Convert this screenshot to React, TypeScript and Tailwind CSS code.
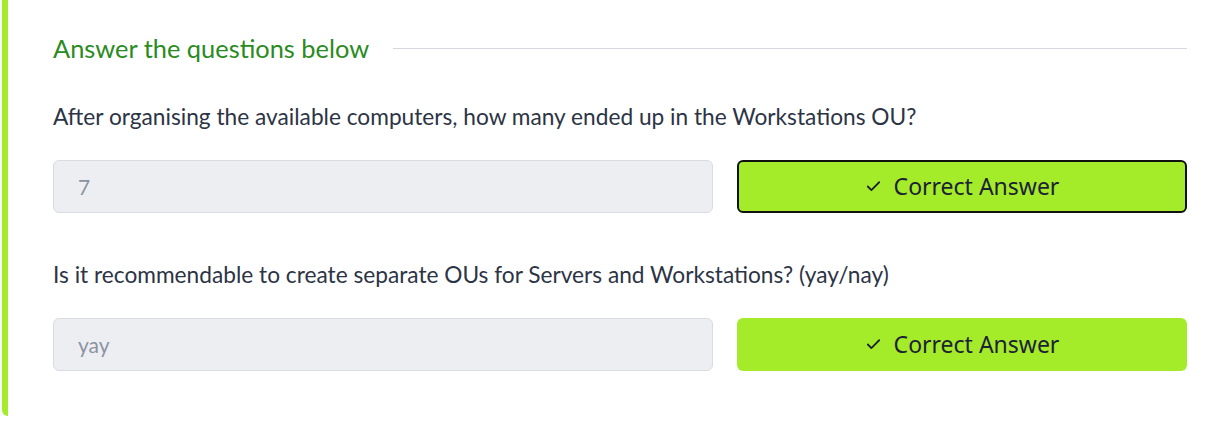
import { Check } from 'lucide-react';

interface Question {
  text: string;
  answer: string;
  focused?: boolean;
}

const questions: Question[] = [
  {
    text: 'After organising the available computers, how many ended up in the Workstations OU?',
    answer: '7',
    focused: true,
  },
  {
    text: 'Is it recommendable to create separate OUs for Servers and Workstations? (yay/nay)',
    answer: 'yay',
  },
];

function AnswerRow({ question }: { question: Question }) {
  return (
    <div className="flex flex-col">
      <p className="text-[22.7px] leading-[26px] text-[#2c3445] font-['Lato',sans-serif]">{question.text}</p>
      <div className="mt-[30px] flex gap-6">
        <input
          readOnly
          value={question.answer}
          className="w-[660px] h-[53px] rounded-md border border-[#d9dce2] bg-[#edeef2] px-[24px] text-[21px] text-[#8b93a3] font-['Lato',sans-serif] outline-none"
        />
        <button
          className={`flex-1 h-[53px] rounded-md bg-[#a4eb2a] flex items-center justify-center gap-3 text-[23px] text-[#1d2233] font-['Noto_Sans',sans-serif] cursor-pointer ${
            question.focused ? 'border-2 border-[#111111]' : 'border-2 border-transparent'
          }`}
        >
          <Check className="w-[17px] h-[17px]" strokeWidth={2.5} />
          Correct Answer
        </button>
      </div>
    </div>
  );
}

export default function App() {
  return (
    <div className="min-h-[426px] bg-[#f8f8fa]">
      <div className="ml-[2px] -mt-[10px] bg-white border-l-[6px] border-[#a4eb2a] rounded-bl-md pl-[45px] pr-[41px] pt-[38px] pb-[45px]">
        {/* Section heading with divider line */}
        <div className="flex items-center gap-6">
          <h2 className="text-[25.4px] leading-[40px] text-[#2a8b1e] font-['Lato',sans-serif]">Answer the questions below</h2>
          <div className="flex-1 h-px bg-[#d5d8de]" />
        </div>
        <div className="mt-[36px] flex flex-col gap-[49px]">
          {questions.map((q, i) => (
            <AnswerRow key={i} question={q} />
          ))}
        </div>
      </div>
    </div>
  );
}
